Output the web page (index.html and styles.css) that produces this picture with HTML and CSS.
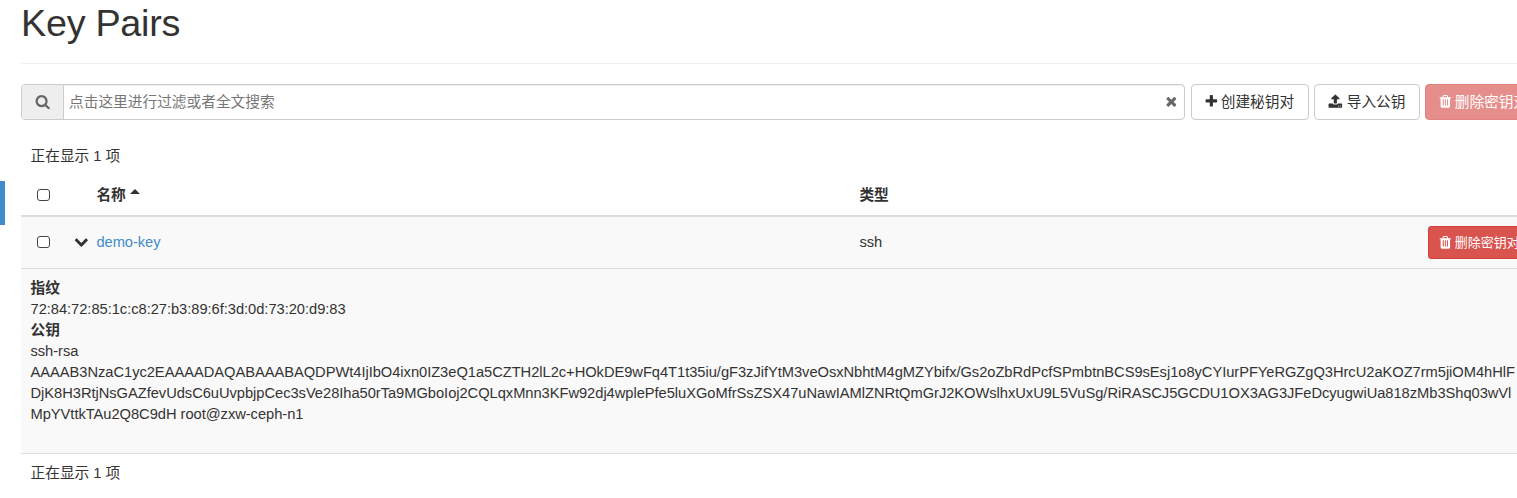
FILE: index.html
```html
<!DOCTYPE html>
<html lang="zh-CN">
<head>
<meta charset="utf-8">
<title>Key Pairs</title>
<link rel="stylesheet" href="styles.css">
</head>
<body>
<svg class="sprite" aria-hidden="true">
  <symbol id="search" viewBox="0 0 1792 1792"><path d="M1216 832q0-185-131.500-316.500t-316.500-131.500-316.500 131.500-131.500 316.500 131.500 316.500 316.500 131.500 316.500-131.500 131.500-316.500zm512 832q0 52-38 90t-90 38q-54 0-90-38l-343-342q-179 124-399 124-143 0-273.500-55.500t-225-150-150-225-55.500-273.500 55.500-273.500 150-225 225-150 273.500-55.500 273.500 55.500 225 150 150 225 55.500 273.500q0 220-124 399l343 343q37 37 37 90z"/></symbol>
  <symbol id="plus" viewBox="0 0 1792 1792"><path d="M1600 736v192q0 40-28 68t-68 28h-416v416q0 40-28 68t-68 28h-192q-40 0-68-28t-28-68v-416h-416q-40 0-68-28t-28-68v-192q0-40 28-68t68-28h416v-416q0-40 28-68t68-28h192q40 0 68 28t28 68v416h416q40 0 68 28t28 68z"/></symbol>
  <symbol id="upload" viewBox="0 0 1792 1792"><path d="M1344 1472q0-26-19-45t-45-19-45 19-19 45 19 45 45 19 45-19 19-45zm256 0q0-26-19-45t-45-19-45 19-19 45 19 45 45 19 45-19 19-45zm128-224v320q0 40-28 68t-68 28h-1472q-40 0-68-28t-28-68v-320q0-40 28-68t68-28h427q21 56 70.500 92t110.500 36h256q61 0 110.500-36t70.500-92h427q40 0 68 28t28 68zm-325-648q-17 40-59 40h-256v448q0 26-19 45t-45 19h-256q-26 0-45-19t-19-45v-448h-256q-42 0-59-40-17-39 14-69l448-448q18-19 45-19t45 19l448 448q31 30 14 69z"/></symbol>
  <symbol id="times" viewBox="0 0 1792 1792"><path d="M1490 1322q0 40-28 68l-136 136q-28 28-68 28t-68-28l-294-294-294 294q-28 28-68 28t-68-28l-136-136q-28-28-28-68t28-68l294-294-294-294q-28-28-28-68t28-68l136-136q28-28 68-28t68 28l294 294 294-294q28-28 68-28t68 28l136 136q28 28 28 68t-28 68l-294 294 294 294q28 28 28 68z"/></symbol>
  <symbol id="chevron" viewBox="0 0 1792 1792"><path d="M1683 808l-742 741q-19 19-45 19t-45-19l-742-741q-19-19-19-45.500t19-45.500l166-165q19-19 45-19t45 19l531 531 531-531q19-19 45-19t45 19l166 165q19 19 19 45.500t-19 45.500z"/></symbol>
  <symbol id="trash" viewBox="0 0 1792 1792"><path d="M704 1376v-704q0-14-9-23t-23-9h-64q-14 0-23 9t-9 23v704q0 14 9 23t23 9h64q14 0 23-9t9-23zm256 0v-704q0-14-9-23t-23-9h-64q-14 0-23 9t-9 23v704q0 14 9 23t23 9h64q14 0 23-9t9-23zm256 0v-704q0-14-9-23t-23-9h-64q-14 0-23 9t-9 23v704q0 14 9 23t23 9h64q14 0 23-9t9-23zm-544-992h448l-48-117q-7-9-17-11h-317q-10 2-17 11zm928 32v64q0 14-9 23t-23 9h-96v948q0 83-47 143.500t-113 60.500h-832q-66 0-113-58.500t-47-141.500v-952h-96q-14 0-23-9t-9-23v-64q0-14 9-23t23-9h309l70-167q15-37 54-63t79-26h320q40 0 79 26t54 63l70 167h309q14 0 23 9t9 23z"/></symbol>
</svg>
<div class="page">
  <aside class="sidebar"><div class="sidebar-active"></div></aside>
  <main class="content">
    <h1 class="title">Key Pairs</h1>
    <div class="toolbar">
      <div class="search">
        <span class="search-addon"><svg class="icon icon-search"><use href="#search"/></svg></span>
        <span class="search-input">点击这里进行过滤或者全文搜索</span>
        <svg class="icon search-clear"><use href="#times"/></svg>
      </div>
      <button class="btn btn-create"><svg class="icon icon-plus"><use href="#plus"/></svg><span>创建秘钥对</span></button>
      <button class="btn btn-import"><svg class="icon icon-upload"><use href="#upload"/></svg><span>导入公钥</span></button>
      <button class="btn btn-danger" disabled><svg class="icon icon-trash"><use href="#trash"/></svg><span>删除密钥对</span></button>
    </div>
    <div class="table">
      <div class="count">正在显示 1 项</div>
      <div class="row row-head">
        <span class="check"></span><span></span>
        <span class="name-head">名称<i class="caret"></i></span>
        <span>类型</span>
      </div>
      <div class="row row-item">
        <span class="check"></span>
        <svg class="icon icon-chevron"><use href="#chevron"/></svg>
        <a class="link">demo-key</a>
        <span>ssh</span>
        <button class="btn btn-danger btn-small"><svg class="icon icon-trash"><use href="#trash"/></svg><span>删除密钥对</span></button>
      </div>
      <dl class="detail">
        <dt>指纹</dt>
        <dd>72:84:72:85:1c:c8:27:b3:89:6f:3d:0d:73:20:d9:83</dd>
        <dt>公钥</dt>
        <dd>ssh-rsa<br>AAAAB3NzaC1yc2EAAAADAQABAAABAQDPWt4IjIbO4ixn0IZ3eQ1a5CZTH2lL2c+HOkDE9wFq4T1t35iu/gF3zJifYtM3veOsxNbhtM4gMZYbifx/Gs2oZbRdPcfSPmbtnBCS9sEsj1o8yCYIurPFYeRGZgQ3HrcU2aKOZ7rm5jiOM4hHlF<br>DjK8H3RtjNsGAZfevUdsC6uUvpbjpCec3sVe28Iha50rTa9MGboIoj2CQLqxMnn3KFw92dj4wplePfe5luXGoMfrSsZSX47uNawIAMlZNRtQmGrJ2KOWslhxUxU9L5VuSg/RiRASCJ5GCDU1OX3AG3JFeDcyugwiUa818zMb3Shq03wVl<br>MpYVttkTAu2Q8C9dH root@zxw-ceph-n1</dd>
      </dl>
      <div class="count count-foot">正在显示 1 项</div>
    </div>
  </main>
</div>
</body>
</html>
```
FILE: styles.css
```css
* { box-sizing: border-box; }
body {
  margin: 0;
  background: #fff;
  color: #333;
  font: 14.7px/21px "Liberation Sans", "Noto Sans CJK SC", sans-serif;
}
.sprite { display: none; }
.page { display: flex; height: 498px; overflow: hidden; }
.sidebar { width: 5px; flex: none; padding-top: 181px; }
.sidebar-active { height: 44px; background: #428bca; }
.content { width: 1580px; flex: none; padding-left: 16px; }
.title {
  height: 64px;
  margin: 0;
  padding-top: 2px;
  border-bottom: 1px solid #eee;
  font-size: 37.8px;
  font-weight: normal;
  letter-spacing: -.3px;
  line-height: 42px;
}
.icon { width: 14.7px; height: 14.7px; flex: none; fill: currentColor; }
.toolbar { display: flex; margin-top: 20px; height: 36px; }
.search {
  display: flex;
  align-items: center;
  width: 1164px;
  flex: none;
  margin-right: 6px;
  border: 1px solid #ccc;
  border-radius: 4px;
  box-shadow: inset 0 1px 1px rgba(0, 0, 0, .075);
  color: #777;
}
.search-addon {
  display: flex;
  align-items: center;
  justify-content: center;
  width: 42px;
  height: 34px;
  border-right: 1px solid #ccc;
  border-radius: 3px 0 0 3px;
  background: #eee;
  color: #666;
}
.icon-search { width: 15.4px; height: 15.4px; margin-left: 1px; }
.search-input { flex: 1; padding-left: 5px; }
.search-clear { margin: 0 5px 1px 0; color: #666; }
.btn {
  display: flex;
  align-items: center;
  height: 36px;
  flex: none;
  margin: 0 5px 0 0;
  padding: 0 12px;
  border: 1px solid #ccc;
  border-radius: 4px;
  background: #fff;
  color: #333;
  font: inherit;
  white-space: nowrap;
}
.btn .icon { margin-bottom: 1px; }
.btn-create { width: 118px; }
.btn-import { width: 106px; }
.icon-plus { margin: 0 2.500px 0 -.5px; }
.icon-upload { margin: 0 4px 0 1px; }
.icon-trash { margin: 0 2px 0 0; }
.btn-danger { border-color: #d43f3a; background: #d9534f; color: #fff; }
.btn-danger:disabled { opacity: .65; }
.count { height: 54px; padding: 26px 9.500px 0; }
.row {
  display: grid;
  grid-template-columns: 37px 28.400px 763px 568.600px auto;
  align-items: center;
  padding-left: 10px;
}
.row-head { height: 43px; border-bottom: 2px solid #ddd; font-weight: bold; }
.row-head > span:not(.check) { padding-top: 1px; }
.row-item { height: 52px; border-bottom: 1px solid #ddd; background: #f9f9f9; }
.check {
  width: 13px;
  height: 12px;
  margin-left: 6px;
  border: 1px solid #444;
  border-radius: 3px;
  background: #fff;
}
.row-item .check { margin-bottom: 1px; }
.name-head { display: flex; gap: 4px; }
.caret {
  height: 5px;
  margin-top: 4px;
  border: solid transparent;
  border-width: 0 5px 5px;
  border-bottom-color: #333;
}
.icon-chevron { margin: 0 0 2px 6px; }
.link { color: #428bca; letter-spacing: -.05px; }
.btn-small { width: 110px; height: 33px; padding: 0 9px; font-size: 13px; border-radius: 3px; }
.detail {
  height: 185px;
  margin: 0;
  padding: 9px 9.500px 7px;
  border-bottom: 1px solid #ddd;
  background: #f9f9f9;
  white-space: nowrap;
}
.detail dt { font-weight: bold; }
.detail dd { margin: 0; letter-spacing: -.038px; }
.count-foot { padding-top: 9px; }
```
